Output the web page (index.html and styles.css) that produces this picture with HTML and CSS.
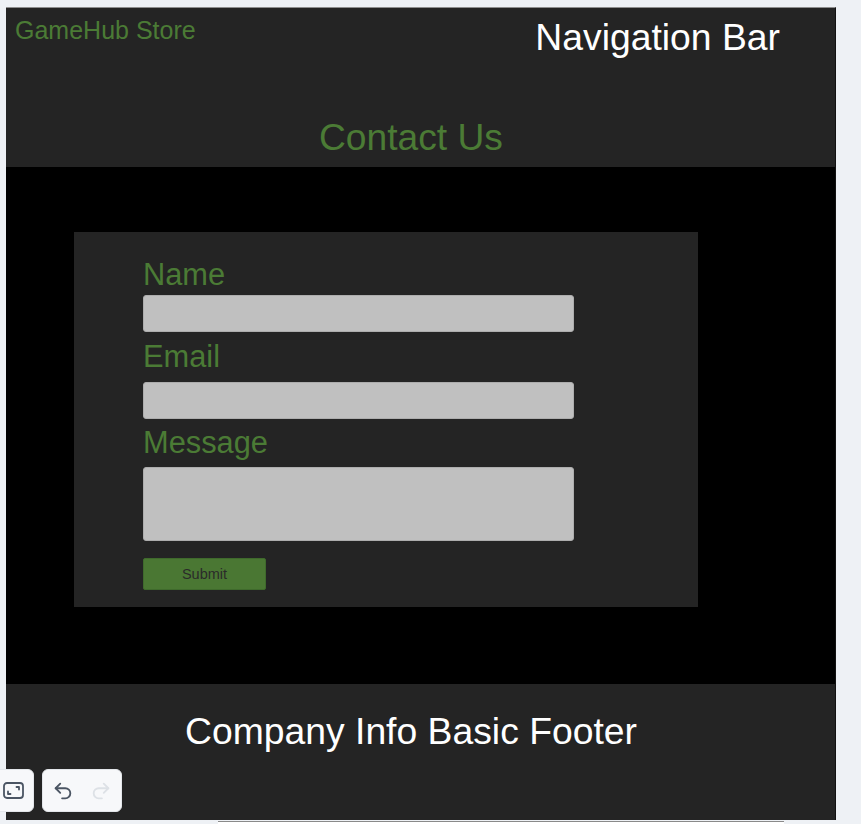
FILE: index.html
```html
<!DOCTYPE html>
<html>
<head>
<meta charset="utf-8">
<link rel="stylesheet" href="styles.css">
</head>
<body>
<div class="frame">
  <header class="header">
    <div class="nav-row">
      <div class="brand">GameHub Store</div>
      <div class="nav-title">Navigation Bar</div>
    </div>
    <h1 class="page-title">Contact Us</h1>
  </header>
  <main class="main">
    <form class="card">
      <label class="label">Name</label>
      <input class="field first" type="text">
      <label class="label">Email</label>
      <input class="field" type="text">
      <label class="label msg">Message</label>
      <textarea class="field area"></textarea>
      <button class="submit" type="button">Submit</button>
    </form>
  </main>
  <footer class="footer">
    <div class="footer-text">Company Info Basic Footer</div>
  </footer>
</div>
<div class="toolbar">
  <div class="tool-box fit">
    <svg width="21" height="17" viewBox="0 0 21 17" fill="none" stroke="#4b5563" stroke-width="1.8" stroke-linecap="round" stroke-linejoin="round">
      <rect x="1" y="1" width="19" height="15" rx="3"/>
      <path d="M5 9.5v2.5h2.5M16 7.5v-2.5h-2.5"/>
    </svg>
  </div>
  <div class="tool-box history">
    <svg width="22" height="22" viewBox="0 0 24 24" fill="none" stroke="#4b5563" stroke-width="2" stroke-linecap="round" stroke-linejoin="round">
      <path d="M9 14L4 9l5-5"/>
      <path d="M4 9h10.5a5.5 5.5 0 0 1 0 11H11"/>
    </svg>
    <svg width="22" height="22" viewBox="0 0 24 24" fill="none" stroke="#dde1e6" stroke-width="2" stroke-linecap="round" stroke-linejoin="round">
      <path d="M15 14l5-5-5-5"/>
      <path d="M20 9H9.5a5.5 5.5 0 0 0 0 11H13"/>
    </svg>
  </div>
</div>
<div class="hscroll"></div>
</body>
</html>
```
FILE: styles.css
```css
html, body {
  margin: 0;
  padding: 0;
}
body {
  background: #eef1f5;
  font-family: "Liberation Sans", Arial, sans-serif;
  width: 861px;
  height: 824px;
  overflow: hidden;
  position: relative;
}
.frame {
  margin-left: 6px;
  margin-top: 7px;
  width: 829px;
  border-top: 1px solid #8e8e8e;
  border-right: 1px solid #111;
  background: #000;
}
.header {
  background: #242424;
  padding: 8px 0 9px 0;
  display: flex;
  flex-direction: column;
}
.nav-row {
  display: flex;
  align-items: flex-start;
  justify-content: space-between;
  padding: 0 55px 0 9px;
}
.brand {
  color: #4b7b35;
  font-size: 25px;
  line-height: 28px;
}
.nav-title {
  color: #fff;
  font-size: 37.3px;
  line-height: 42px;
}
.page-title {
  margin: 58px 0 0 0;
  padding-right: 19px;
  text-align: center;
  color: #4b7b35;
  font-weight: normal;
  font-size: 37.2px;
  line-height: 42px;
}
.main {
  background: #000;
  padding: 65px 0 77px 68px;
}
.card {
  width: 555px;
  background: #242424;
  padding: 26px 0 17px 69px;
  display: flex;
  flex-direction: column;
  align-items: flex-start;
  margin: 0;
}
.label {
  color: #4b7b35;
  font-size: 30.8px;
  line-height: 34px;
}
.msg {
  margin-top: -1px;
}
.field {
  box-sizing: border-box;
  width: 431px;
  height: 37px;
  background: #c0c0c0;
  border: 1px solid #adadad;
  border-radius: 3px;
  margin: 8px 0 8px 0;
  padding: 0;
  font-family: inherit;
}
.field.first {
  margin-top: 3px;
}
.area {
  height: 74px;
  resize: none;
  margin-top: 7px;
  margin-bottom: 17px;
}
.submit {
  width: 123px;
  height: 32px;
  background: #4a7733;
  border: 1px solid #3f6a2c;
  border-radius: 2px;
  color: #2a2a2a;
  font-family: inherit;
  font-size: 14.5px;
  padding: 0;
}
.footer {
  background: #242424;
  height: 136px;
  padding-top: 26px;
  box-sizing: border-box;
}
.footer-text {
  color: #fff;
  font-size: 37.3px;
  line-height: 42px;
  text-align: center;
  padding-right: 19px;
}
.toolbar {
  position: absolute;
  left: -8px;
  top: 769px;
  display: flex;
  gap: 8px;
}
.tool-box {
  box-sizing: border-box;
  height: 43px;
  background: #f7f8fa;
  border: 1px solid #e3e6ea;
  border-radius: 6px;
  display: flex;
  align-items: center;
}
.fit {
  width: 42px;
  padding-left: 10px;
}
.history {
  width: 80px;
  padding-left: 9px;
  gap: 16px;
}
.hscroll {
  position: absolute;
  left: 218px;
  top: 821px;
  width: 566px;
  height: 3px;
  border-top: 1px solid #8a8a8a;
  background: #fff;
}
```
